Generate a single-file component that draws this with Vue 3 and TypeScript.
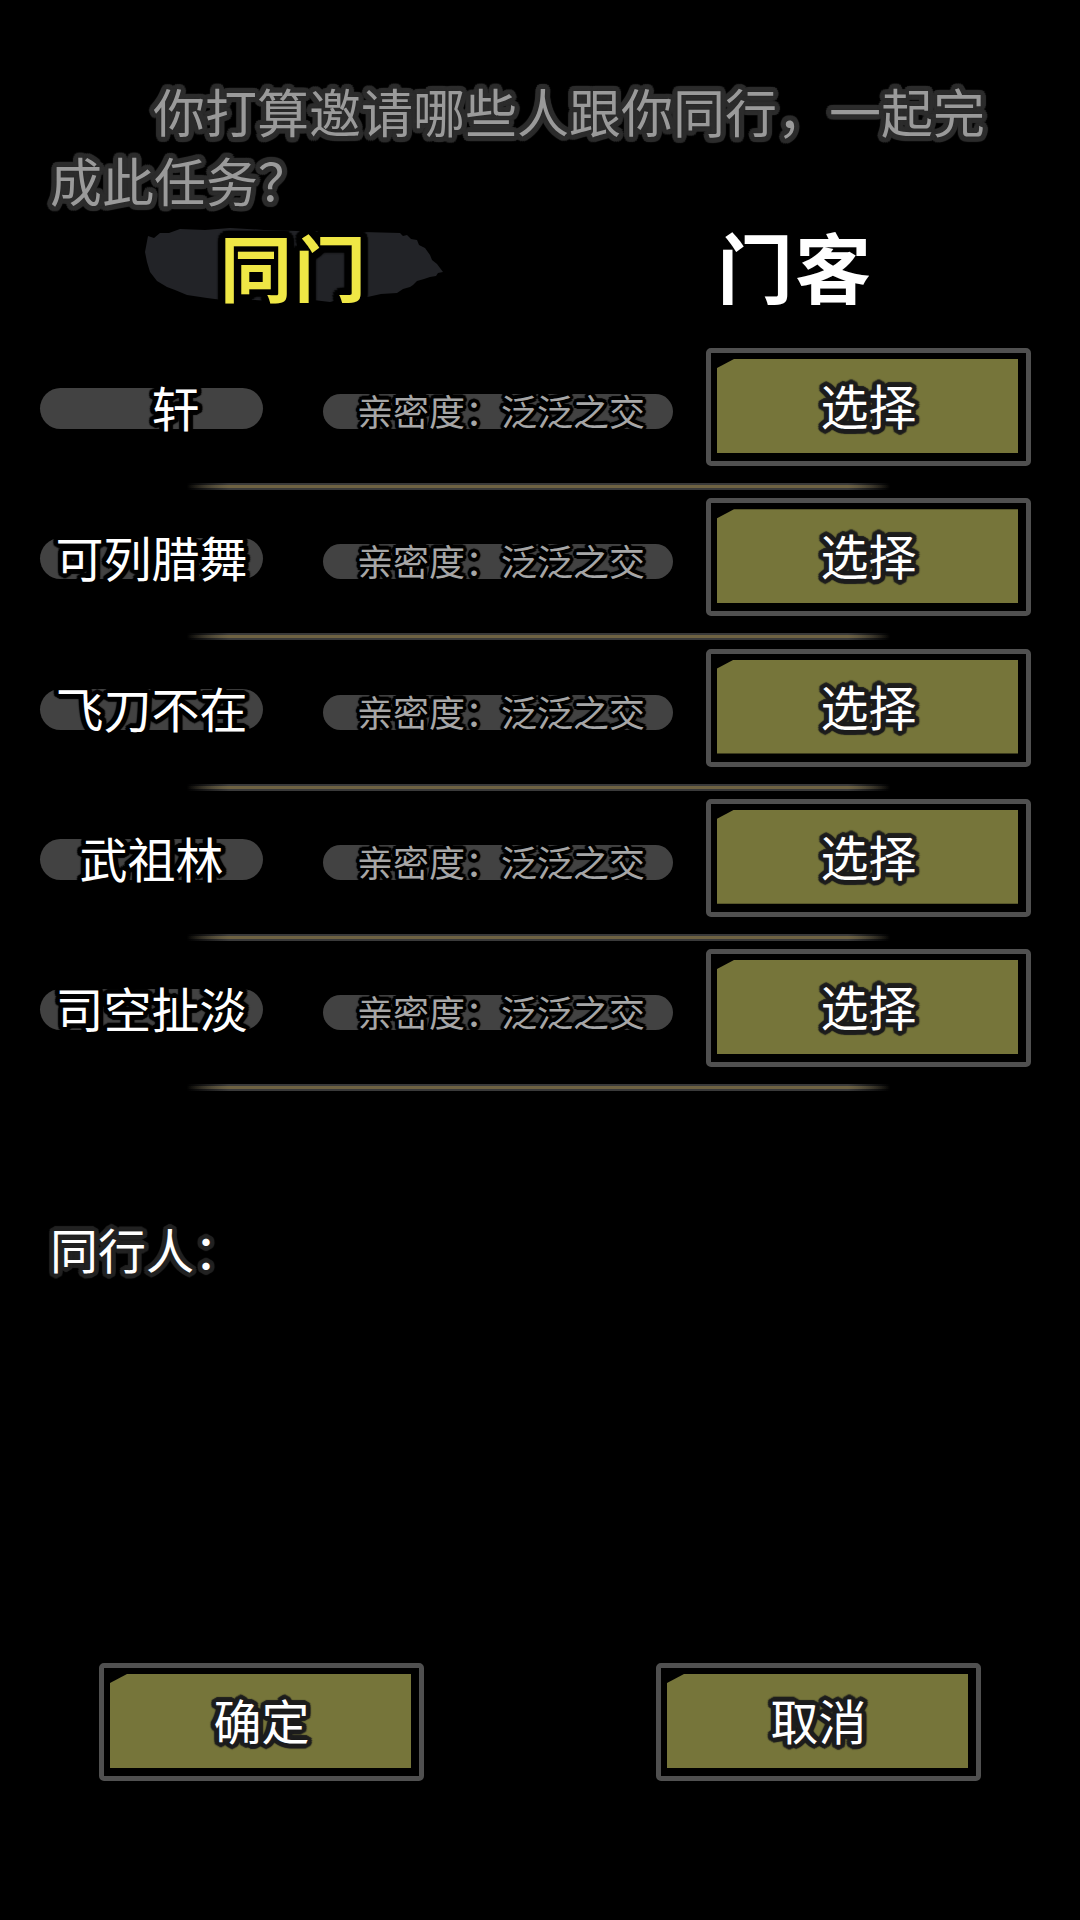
<script setup lang="ts">
interface Person {
  name: string
}

const people: Person[] = [
  { name: '\u3000轩' },
  { name: '可列腊舞' },
  { name: '飞刀不在' },
  { name: '武祖林' },
  { name: '司空扯淡' },
]
</script>

<template>
  <main class="page">
    <p class="question outlined">你打算邀请哪些人跟你同行，一起完成此任务？</p>

    <nav class="tabs">
      <div class="tab tab-active">
        <svg class="brush" viewBox="0 0 298 76" aria-hidden="true">
          <path
            d="M0 25 L3 9 L9 11 L15 6 L24 6 L35 2 L60 3 L85 1 L120 3 L152 4 L186 4 L218 5 L255 6 L258 9 L262 8 L266 12 L272 13 L274 18 L280 21 L285 28 L287 33 L292 37 L298 45 L293 46 L291 49 L285 50 L279 52 L272 54 L268 58 L265 60 L258 62 L252 66 L236 67 L218 71 L204 70 L185 75 L160 72 L135 75 L110 73 L85 74 L62 71 L42 68 L30 63 L22 60 L12 54 L5 45 L2 35 Z"
            fill="#222327"
          />
        </svg>
        <span class="tab-label tab-label-active outlined">同门</span>
      </div>
      <div class="tab">
        <span class="tab-label tab-label-plain">门客</span>
      </div>
    </nav>

    <section class="list">
      <article v-for="person in people" :key="person.name" class="entry">
        <div class="row">
          <div class="pill name-pill"><span class="name outlined">{{ person.name }}</span></div>
          <div class="pill bond-pill"><span class="bond outlined">亲密度：泛泛之交</span></div>
          <button class="action" type="button"><span class="action-fill outlined">选择</span></button>
        </div>
        <div class="divider"></div>
      </article>
    </section>

    <p class="companions outlined">同行人：</p>

    <footer class="footer">
      <button class="action" type="button"><span class="action-fill outlined">确定</span></button>
      <button class="action" type="button"><span class="action-fill outlined">取消</span></button>
    </footer>
  </main>
</template>

<style>
html,
body {
  margin: 0;
  background: #000;
}
</style>

<style scoped>
.page {
  box-sizing: border-box;
  width: 1080px;
  height: 1920px;
  display: flex;
  flex-direction: column;
  background: #000;
  padding-bottom: 139px;
  overflow: hidden;
  font-family: "Noto Sans CJK SC", "Noto Sans", sans-serif;
}

.outlined {
  text-shadow:
    0.1em 0 0.02em var(--edge),
    -0.1em 0 0.02em var(--edge),
    0 0.1em 0.02em var(--edge),
    0 -0.1em 0.02em var(--edge),
    0.071em 0.071em 0.02em var(--edge),
    -0.071em 0.071em 0.02em var(--edge),
    0.071em -0.071em 0.02em var(--edge),
    -0.071em -0.071em 0.02em var(--edge),
    0.092em 0.038em 0.02em var(--edge),
    -0.092em 0.038em 0.02em var(--edge),
    0.092em -0.038em 0.02em var(--edge),
    -0.092em -0.038em 0.02em var(--edge),
    0.038em 0.092em 0.02em var(--edge),
    -0.038em 0.092em 0.02em var(--edge),
    0.038em -0.092em 0.02em var(--edge),
    -0.038em -0.092em 0.02em var(--edge),
    0.05em 0 0 var(--edge),
    -0.05em 0 0 var(--edge),
    0 0.05em 0 var(--edge),
    0 -0.05em 0 var(--edge);
}

.question {
  --edge: #2c2c2c;
  margin: 76px 80px 0 50px;
  font-size: 52px;
  line-height: 69px;
  text-indent: 103px;
  color: #9a9a9a;
}

.tabs {
  display: flex;
  margin: 13px 0 0 145px;
  gap: 205px;
}

.tab {
  position: relative;
  width: 298px;
  height: 76px;
  display: flex;
  align-items: center;
  justify-content: center;
}

.brush {
  position: absolute;
  inset: 0;
  width: 100%;
  height: 100%;
}

.tab-label {
  position: relative;
  font-size: 72px;
  line-height: 76px;
  font-weight: 700;
  letter-spacing: 2px;
}

.tab-label-plain {
  font-size: 76px;
  color: #fff;
  left: -2px;
}

.tab-label-active {
  --edge: #000;
  color: #efe745;
}

.list {
  display: flex;
  flex-direction: column;
  margin-top: 45px;
}

.entry {
  height: 150.25px;
  display: flex;
  flex-direction: column;
}

.row {
  display: flex;
  align-items: center;
  height: 118px;
  padding-left: 40px;
}

.pill {
  display: flex;
  align-items: center;
  justify-content: center;
  background: #424242;
  border-radius: 21px;
}

.name-pill {
  width: 223px;
  height: 41px;
  margin-top: 3px;
}

.name {
  --edge: #000;
  font-size: 48px;
  line-height: 41px;
  white-space: pre;
  margin-bottom: 4px;
  color: #fff;
}

.bond-pill {
  width: 350px;
  height: 35px;
  margin: 9px 33px 0 60px;
}

.bond {
  --edge: #000;
  font-size: 36px;
  line-height: 35px;
  white-space: nowrap;
  margin: 0 0 2px 6px;
  color: #a6a6a6;
}

.action {
  box-sizing: border-box;
  flex: none;
  width: 325px;
  height: 118px;
  padding: 6px 8px 8px 6px;
  border: 5px solid #505050;
  border-radius: 5px;
  background: #000;
  cursor: pointer;
}

.action-fill {
  --edge: #1d1d1d;
  box-sizing: border-box;
  width: 100%;
  height: 100%;
  display: flex;
  align-items: center;
  justify-content: center;
  padding: 0 0 4px 2px;
  background: #76753a;
  clip-path: polygon(17px 0, 100% 0, 100% 100%, 0 100%, 0 9px);
  font-family: "Noto Sans CJK SC", "Noto Sans", sans-serif;
  font-size: 48px;
  line-height: 60px;
  color: #fff;
}

.divider {
  width: 703px;
  height: 7px;
  box-sizing: border-box;
  margin: 17px 0 0 187px;
  border-top: 2px solid transparent;
  border-bottom: 2px solid transparent;
  background:
    linear-gradient(90deg, transparent 0, #6e6242 6%, #6e6242 94%, transparent 100%) padding-box,
    linear-gradient(90deg, transparent 0, #3a3a3a 6%, #3a3a3a 94%, transparent 100%) border-box;
}

.companions {
  --edge: #222;
  margin: 119px 0 0 50px;
  font-size: 48px;
  line-height: 60px;
  color: #fff;
}

.footer {
  display: flex;
  gap: 232px;
  margin-top: auto;
  padding-left: 99px;
}
</style>
